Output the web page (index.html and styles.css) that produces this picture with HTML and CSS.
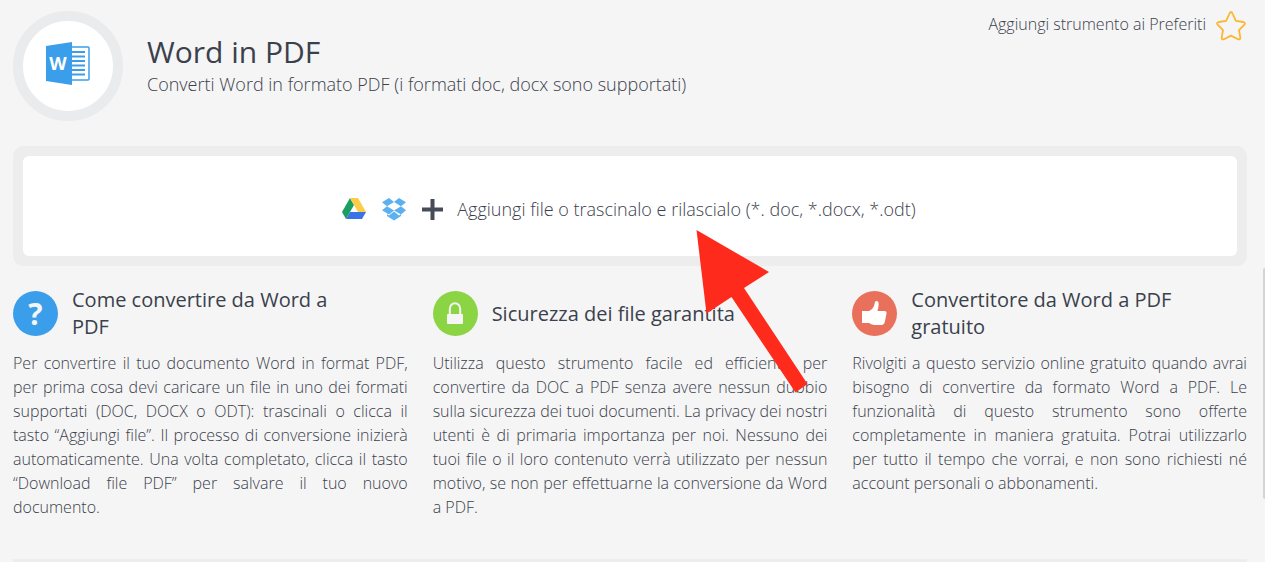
FILE: index.html
```
<!DOCTYPE html>
<html lang="it">
<head>
  <meta charset="UTF-8" />
  <meta name="viewport" content="width=device-width, initial-scale=1.0"/>
  <title>Word in PDF</title>
  <link rel="stylesheet" href="styles.css">
</head>
<body>
  <header class="tool-header">
    <div class="tool-icon">
      <svg width="44" height="44" viewBox="0 0 44 44" aria-hidden="true">
        <rect x="20" y="5" width="23" height="33" rx="1" fill="#fff" stroke="#3b9eea" stroke-width="1.5"/>
        <path d="M26 10h13M26 14.500h13M26 19h13M26 23.500h13M26 28h13M26 32.500h13" stroke="#3b9eea" stroke-width="2"/>
        <path d="M0 4L26 0v43L0 39z" fill="#3b9eea"/>
        <text class="word-letter" x="12" y="28" text-anchor="middle">W</text>
      </svg>
    </div>
    <div class="tool-title">
      <h1>Word in PDF</h1>
      <p>Converti Word in formato PDF (i formati doc, docx sono supportati)</p>
    </div>
    <button type="button" class="favorite">
      Aggiungi strumento ai Preferiti
      <svg width="30" height="30" viewBox="0 0 30 30" aria-hidden="true">
        <path d="M15 1Q16 1 17 3.500L19.800 9.800 27.300 11Q30 11.800 28.200 13.800L23 19.200 24.300 26.600Q24.400 29 22 28.200L15 24.600 8 28.200Q5.600 29 5.700 26.600L7 19.200 1.800 13.800Q0 11.800 2.700 11L10.200 9.800 13 3.500Q14 1 15 1z" fill="none" stroke="#fdb62f" stroke-width="1.800" stroke-linejoin="round"/>
      </svg>
    </button>
  </header>

  <main>
    <div class="upload">
      <div class="upload-box">
        <button type="button" class="source" aria-label="Google Drive">
          <svg width="24" height="22" viewBox="0 0 24 22">
            <path d="M8 0L0 14l4 7L12 7z" fill="#1a9f60"/>
            <path d="M8 0h8l8 14h-8z" fill="#fccd48"/>
            <path d="M8 14h16l-4 7H4z" fill="#3b72e5"/>
          </svg>
        </button>
        <button type="button" class="source" aria-label="Dropbox">
          <svg width="24" height="23" viewBox="0 0 24 23" fill="#5cb0f0">
            <path d="M7 0L12 4 5 8.300 0 4.300zM17 0l-5 4 7 4.300 5-4zM5 8.300l7 4.300-5 4-7-4.300zM19 8.300l5 4-5 4.300-7-4zM12 13.600l5 4 2-1.300v1.800L12 22.500 5 18.100v-1.800l2 1.300z"/>
          </svg>
        </button>
        <label class="add-file">
          <svg width="21" height="21" viewBox="0 0 21 21" aria-hidden="true">
            <path d="M10.500 0v21M0 10.500h21" stroke="#454c57" stroke-width="4"/>
          </svg>
          Aggiungi file o trascinalo e rilascialo (*. doc, *.docx, *.odt)
          <input type="file" accept=".doc,.docx,.odt">
        </label>
      </div>
    </div>

    <div class="features">
      <section>
        <div class="feature-title">
          <span class="badge blue">?</span>
          <h2>Come convertire da Word a PDF</h2>
        </div>
        <p>Per convertire il tuo documento Word in format PDF, per prima cosa devi caricare un file in uno dei formati supportati (DOC, DOCX o ODT): trascinali o clicca il tasto “Aggiungi file”. Il processo di conversione inizierà automaticamente. Una volta completato, clicca il tasto “Download file PDF” per salvare il tuo nuovo documento.</p>
      </section>
      <section>
        <div class="feature-title">
          <span class="badge green">
            <svg width="16" height="22" viewBox="0 0 16 22" aria-hidden="true">
              <path d="M2.800 12V7a5.200 5.800 0 0 1 10.400 0v5" fill="none" stroke="#f5f5f5" stroke-width="2"/>
              <rect y="12" width="16" height="10" rx="1" fill="#f5f5f5"/>
            </svg>
          </span>
          <h2>Sicurezza dei file garantita</h2>
        </div>
        <p>Utilizza questo strumento facile ed efficiente per convertire da DOC a PDF senza avere nessun dubbio sulla sicurezza dei tuoi documenti. La privacy dei nostri utenti è di primaria importanza per noi. Nessuno dei tuoi file o il loro contenuto verrà utilizzato per nessun motivo, se non per effettuarne la conversione da Word a PDF.</p>
      </section>
      <section>
        <div class="feature-title">
          <span class="badge red">
            <svg width="25" height="24" viewBox="0 0 25 24" aria-hidden="true">
              <path d="M0 10h7q4-2 5-5l1-4q1-1.500 3-.5 1.500 2-.5 9.500h7.500q2 .5 1.500 2.500L23 20q-.5 3.500-3 4H12q-3-.5-5-2H0z" fill="#fff"/>
            </svg>
          </span>
          <h2>Convertitore da Word a PDF gratuito</h2>
        </div>
        <p>Rivolgiti a questo servizio online gratuito quando avrai bisogno di convertire da formato Word a PDF. Le funzionalità di questo strumento sono offerte completamente in maniera gratuita. Potrai utilizzarlo per tutto il tempo che vorrai, e non sono richiesti né account personali o abbonamenti.</p>
      </section>
    </div>
    <div class="divider"></div>
  </main>

  <svg class="arrow" width="112" height="163" viewBox="0 0 112 163" aria-hidden="true">
    <path d="M0.500 0L73 42 48 58 111.500 154 99.500 162.500 35.500 67 10.500 83.500z" fill="#fe2b1c"/>
  </svg>
  <div class="scroll-thumb"></div>
</body>
</html>
```

FILE: styles.css
```
* {
  box-sizing: border-box;
}
body {
  margin: 0;
  padding: 11px 18px 0 13px;
  background-color: #f5f5f5;
  color: #3a414c;
  font-family: "Open Sans", sans-serif;
  font-weight: 300;
  position: relative;
  overflow: hidden;
}
h1, h2, p {
  margin: 0;
}
button {
  padding: 0;
  border: none;
  background: none;
  color: inherit;
  font: inherit;
  cursor: pointer;
}
svg {
  display: block;
  flex-shrink: 0;
}

.tool-header {
  display: flex;
  align-items: flex-start;
}
.tool-icon {
  display: flex;
  align-items: center;
  justify-content: center;
  width: 110px;
  height: 110px;
  padding-bottom: 4px;
  border: 10px solid #e9ebec;
  border-radius: 50%;
  background-color: #fff;
}
.word-letter {
  font-size: 18px;
  font-weight: 700;
  fill: #fff;
}
.tool-title {
  flex: 1;
  padding: 20px 0 0 24px;
}
.tool-title h1 {
  font-size: 30px;
  line-height: 41px;
  font-weight: 400;
}
.tool-title p {
  font-size: 18px;
  line-height: 24px;
}
.favorite {
  display: flex;
  align-items: flex-start;
  gap: 10px;
  padding-right: 1px;
  font-size: 16px;
  line-height: 26px;
}

.upload {
  margin-top: 25px;
  padding: 10px;
  border-radius: 10px;
  background-color: #ededed;
}
.upload-box {
  display: flex;
  align-items: center;
  justify-content: center;
  gap: 16px;
  min-height: 100px;
  padding: 6px 2px 0 0;
  border-radius: 6px;
  background-color: #fff;
}
.add-file {
  display: flex;
  align-items: center;
  gap: 14px;
  font-size: 18px;
  line-height: 24px;
  cursor: pointer;
}
.add-file input {
  position: absolute;
  width: 1px;
  height: 1px;
  opacity: 0;
}

.features {
  display: grid;
  grid-template-columns: repeat(3, 1fr);
  gap: 25px;
  margin-top: 20px;
}
.feature-title {
  display: flex;
  align-items: center;
  gap: 14px;
  min-height: 54px;
  padding-right: 60px;
}
.feature-title h2 {
  font-size: 20px;
  line-height: 27px;
  font-weight: 400;
}
.badge {
  display: flex;
  align-items: center;
  justify-content: center;
  flex-shrink: 0;
  width: 45px;
  height: 45px;
  border-radius: 50%;
  color: #f5f5f5;
  font-size: 30px;
  line-height: 45px;
  font-weight: 700;
}
.blue {
  background-color: #3b9eea;
}
.green {
  background-color: #8bd444;
}
.red {
  background-color: #e9705b;
}
.features p {
  margin-top: 11px;
  font-size: 16px;
  line-height: 24px;
  text-align: justify;
}
.divider {
  height: 10px;
  margin-top: 40px;
  background-color: #ededed;
}

/* pointer towards the upload box */
.arrow {
  position: absolute;
  top: 230px;
  left: 696px;
}
.scroll-thumb {
  position: absolute;
  top: 268px;
  right: 0;
  width: 2px;
  height: 231px;
  border-radius: 2px 0 0 2px;
  background-color: #d4d4d4;
}
```
